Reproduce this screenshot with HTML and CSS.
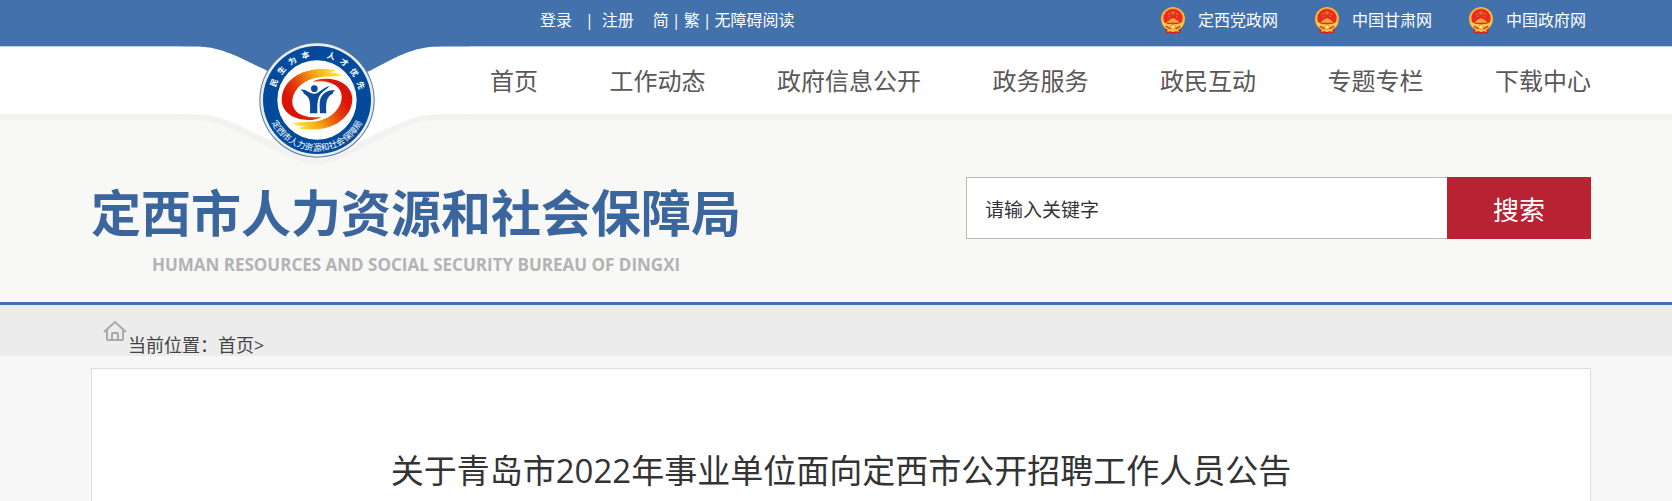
FILE: index.html
```html
<!DOCTYPE html>
<html lang="zh-CN">
<head>
<meta charset="utf-8">
<title>定西市人力资源和社会保障局</title>
<link rel="stylesheet" href="styles.css">
</head>
<body>
<svg class="defs" width="0" height="0" aria-hidden="true">
  <symbol id="emblem" viewBox="0 0 72 81">
    <path d="M12 58h48l-3 22-10-3-11 4-11-4-10 3z" fill="#d8201c"/>
    <circle cx="36" cy="36" r="36" fill="#f0b93a"/>
    <circle cx="36" cy="34" r="29" fill="#ee2a20"/>
    <path d="M36 10l2 5h6l-5 4 2 5-5-3-5 3 2-5-5-4h6zM21 19h5v4h-5zM46 19h5v4h-5zM23 27h4v3h-4zM45 27h4v3h-4z" fill="#d2852a"/>
    <path d="M24 39l12-6 12 6v3h5v5H19v-5h5z" fill="#f0a83a"/>
    <path d="M5 44q13 8 31 8t31-8q-1 14-10 20-10 5-21 5t-21-5Q6 58 5 44z" fill="#f6cf4a"/>
    <path d="M14 58q10 3 14 8M58 58q-10 3-14 8" fill="none" stroke="#d8201c" stroke-width="4"/>
    <circle cx="36" cy="60" r="7" fill="#fbe588" stroke="#dc5a22" stroke-width="2"/>
    <path d="M19 73q8-5 17 0 9-5 17 0" fill="none" stroke="#f3c63c" stroke-width="4"/>
  </symbol>
</svg>
<header>
  <div class="topbar wrap">
    <div class="account">
      <a href="#">登录</a><span class="bar">|</span><a href="#">注册</a>
      <div class="lang"><a href="#">简</a><span>|</span><a href="#">繁</a><span>|</span><a href="#">无障碍阅读</a></div>
    </div>
    <div class="sites">
      <a href="#"><svg class="emblem"><use href="#emblem"/></svg>定西党政网</a>
      <a href="#"><svg class="emblem"><use href="#emblem"/></svg>中国甘肃网</a>
      <a href="#"><svg class="emblem"><use href="#emblem"/></svg>中国政府网</a>
    </div>
  </div>
  <div class="navbar wrap">
    <svg class="badge" viewBox="0 0 870 420" role="img" aria-label="定西市人力资源和社会保障局徽标">
      <defs>
        <linearGradient id="flame" gradientUnits="userSpaceOnUse" x1="330" y1="210" x2="470" y2="120">
          <stop offset="0" stop-color="#dc1407"/><stop offset=".25" stop-color="#e2430b"/><stop offset=".6" stop-color="#f5a014"/><stop offset="1" stop-color="#fff02a"/>
        </linearGradient>
        <path id="arc-top" d="M281 210a130 130 0 0 1 260 0"/>
        <path id="arc-bottom" d="M259 210a152 152 0 0 0 304 0"/>
      </defs>
      <path d="M0 253H50C120 253 180 290 250 320C320 352 370 385 410 385S500 352 570 320C640 290 700 253 770 253H870V271H770C700 271 650 308 580 338C510 370 460 403 410 403S310 370 240 338C170 308 120 271 50 271H0Z" fill="#f2f2f1"/>
      <path d="M0 53H870V253H770C700 253 640 290 570 320C500 352 450 385 410 385S320 352 250 320C180 290 120 253 50 253H0Z" fill="#fff"/>
      <path d="M0 49H40C130 49 185 88 262 122C340 155 370 175 410 175S480 155 570 122C640 88 690 49 790 49H870V40H0Z" fill="#4271ab"/>
      <circle cx="411" cy="210" r="173" fill="#54749b"/>
      <circle cx="411" cy="210" r="170" fill="#e8eef0"/>
      <circle cx="411" cy="210" r="162" fill="#034a9d"/>
      <circle cx="411" cy="210" r="119" fill="#fff"/>
      <g id="half">
        <path d="M424 260C380 268 337 252 337 216C337 184 365 153 405 144C440 137 468 142 488 136C472 128 458 126 440 128L470 122C430 113 385 117 352 135C320 154 305 180 305 211C307 248 342 270 385 270C402 270 415 267 424 260Z" fill="url(#flame)"/>
      </g>
      <use href="#half" transform="rotate(180 411 208)"/>
      <circle cx="403" cy="176" r="10" fill="#0b4a9b"/>
      <path d="M362 179C370 178 376 181 382 184C391 189 398 192 405 191C419 188 428 174 448 168C440 180 423 185 416 203C411 218 412 232 412 250H390C391 226 391 210 382 199C376 193 369 191 370 186ZM465 180C447 179 427 188 421 207C417 220 420 235 420 250H439C438 230 437 213 446 201C452 192 461 194 459 187Z" fill="#0b4a9b"/>
      <text class="motto"><textPath href="#arc-top" startOffset="38">民   生   为   本</textPath></text>
      <text class="motto"><textPath href="#arc-top" startOffset="233">人   才   优   先</textPath></text>
      <text class="ring"><textPath href="#arc-bottom" startOffset="50%">定西市人力资源和社会保障局</textPath></text>
    </svg>
    <nav class="menu">
      <a href="#">首页</a><a href="#">工作动态</a><a href="#">政府信息公开</a><a href="#">政务服务</a><a href="#">政民互动</a><a href="#">专题专栏</a><a href="#">下载中心</a>
    </nav>
  </div>
  <div class="masthead wrap">
    <div class="brand">
      <h1>定西市人力资源和社会保障局</h1>
      <p>HUMAN RESOURCES AND SOCIAL SECURITY BUREAU OF DINGXI</p>
    </div>
    <form class="search">
      <input type="text" value="请输入关键字" aria-label="请输入关键字">
      <button type="button">搜索</button>
    </form>
  </div>
</header>
<div class="crumbs wrap">
  <svg class="home" viewBox="0 0 24 22" aria-hidden="true"><path d="M1 12L12 2l11 10M4 10v9q0 1 1 1h14q1 0 1-1v-9M9 20v-6q0-1 1-1h4q1 0 1 1v6"/></svg>
  <div>当前位置：<a href="#">首页</a>&gt;</div>
</div>
<main class="wrap">
  <article class="card">
    <h2>关于青岛市2022年事业单位面向定西市公开招聘工作人员公告</h2>
  </article>
</main>
</body>
</html>
```
FILE: styles.css
```css
* { box-sizing: border-box; }
body {
  margin: 0;
  background: #f7f7f7;
  color: #333;
  font-family: "Open Sans", "Noto Sans CJK SC", sans-serif;
  overflow-x: hidden;
}
a { color: inherit; text-decoration: none; }
h1, h2, p { margin: 0; }
.defs { position: absolute; }
.wrap { padding-left: 91px; padding-right: 81px; }

.topbar {
  display: flex;
  justify-content: space-between;
  height: 47px;
  padding-right: 86px;
  padding-bottom: 6px;
  background: #4271ab;
  border-bottom: 1px solid #c3d0e2;
  color: #fff;
  font-size: 16px;
  line-height: 24px;
}
.account { display: flex; align-items: center; margin-left: 449px; }
.account .bar { margin: 0 8px 0 13px; }
.lang { display: flex; gap: 3px; margin-left: 19px; }
.sites { display: flex; align-items: center; gap: 37px; }
.sites a { display: flex; align-items: center; gap: 13px; }
.emblem { width: 24px; height: 27px; }

.navbar {
  position: relative;
  height: 67px;
  background: #fff;
}
.badge {
  position: absolute;
  left: 180px;
  top: -17px;
  width: 290px;
  height: 140px;
}
.motto, .ring { fill: #fff; font-family: "Noto Sans CJK SC", sans-serif; white-space: pre; }
.motto { font-size: 24px; font-weight: 700; }
.ring { font-size: 26px; text-anchor: middle; }
.menu {
  display: flex;
  justify-content: space-between;
  align-items: center;
  margin-left: 399px;
  color: #595757;
  font-size: 24px;
  line-height: 67px;
}

.masthead {
  display: flex;
  justify-content: space-between;
  align-items: flex-start;
  height: 191px;
  background: #f8f8f7;
  border-top: 6px solid #f2f2f1;
  border-bottom: 3px solid #4271ab;
}
.brand { padding-top: 63px; }
.brand h1 { color: #3b659d; font-size: 50px; line-height: 60px; }
.brand p {
  margin-top: 10px;
  color: #b3b3b3;
  font-size: 17px;
  font-weight: 700;
  line-height: 24px;
  text-align: center;
}
.search { display: flex; width: 625px; height: 62px; margin-top: 57px; }
.search input {
  flex: 1;
  min-width: 0;
  padding: 2px 18px 0;
  border: 1px solid #bbb;
  border-right: 0;
  background: #fff;
  color: #333;
  font: inherit;
  font-size: 19px;
}
.search button {
  width: 144px;
  padding: 2px 0 0;
  border: 0;
  background: #b92233;
  color: #fff;
  font: inherit;
  font-size: 26px;
}

.crumbs {
  display: flex;
  height: 51px;
  padding-left: 103px;
  padding-top: 15px;
  background: #ececec;
  color: #444;
  font-size: 18px;
  line-height: 24px;
}
.crumbs div { margin-top: 13px; }
.home { width: 24px; height: 22px; margin-right: 1px; fill: none; stroke: #aaa; stroke-width: 2; }

.card {
  margin-top: 12px;
  padding: 79px 20px 60px;
  background: #fff;
  border: 1px solid #ddd;
}
.card h2 { font-size: 33px; font-weight: 400; line-height: 46px; text-align: center; }
```
